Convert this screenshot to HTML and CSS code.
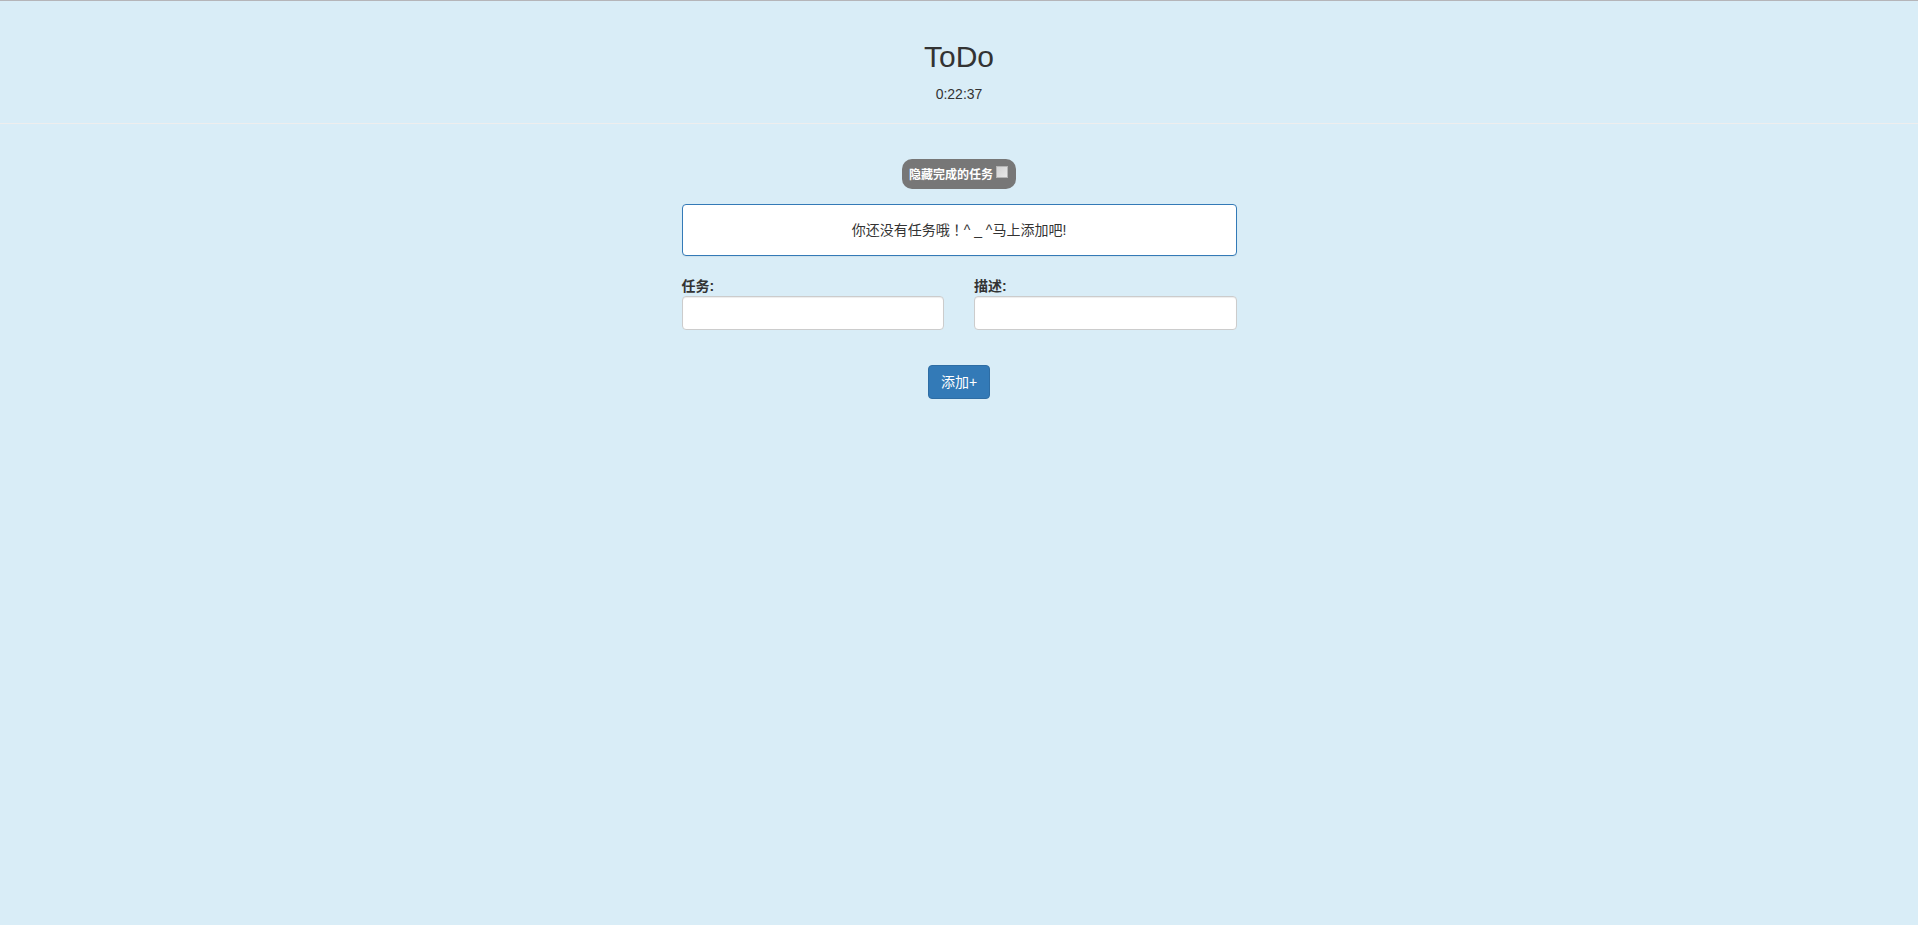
FILE: index.html
```html
<!DOCTYPE html>
<html lang="zh-CN">
<head>
<meta charset="utf-8">
<title>ToDo</title>
<link rel="stylesheet" href="styles.css">
</head>
<body>
<header class="header">
  <h2 class="title">ToDo</h2>
  <p class="clock">0:22:37</p>
</header>
<main class="container">
  <label class="badge" for="hide-done">隐藏完成的任务 <input class="badge-check" type="checkbox" id="hide-done"></label>
  <div class="panel">你还没有任务哦<span class="centered-mark" lang="zh-TW">！</span>^ _ ^马上添加吧!</div>
  <form class="form">
    <div class="fields">
      <div class="field">
        <label class="field-label" for="task">任务:</label>
        <input class="field-input" type="text" id="task">
      </div>
      <div class="field">
        <label class="field-label" for="description">描述:</label>
        <input class="field-input" type="text" id="description">
      </div>
    </div>
    <button class="button" type="button">添加+</button>
  </form>
</main>
</body>
</html>
```

FILE: styles.css
```css
* {
  box-sizing: border-box;
}

body {
  margin: 0;
  min-height: 100vh;
  border-top: 1px solid #b5b5b9;
  background: #d9edf7;
  color: #333;
  font: 14px/20px "Liberation Sans", "Noto Sans CJK SC", sans-serif;
}

.header {
  padding: 39px 0 19px;
  border-bottom: 1px solid #eee;
  text-align: center;
}

.title {
  margin: 0 0 11px;
  font-size: 30px;
  font-weight: 500;
  line-height: 33px;
}

.clock {
  margin: 0;
}

.container {
  display: flex;
  flex-direction: column;
  align-items: center;
  max-width: 555px;
  margin: 35px auto 0;
}

.badge {
  display: flex;
  align-items: center;
  gap: 3px;
  height: 30px;
  padding: 2px 8px 0 7px;
  border-radius: 10px;
  background: #777;
  color: #fff;
  font-size: 12px;
  font-weight: 700;
}

.badge-check {
  appearance: none;
  width: 12px;
  height: 12px;
  margin: 0 0 6px;
  border: 1px solid #b4b4b4;
  background: linear-gradient(135deg, #d2d2d2, #e8e8e8);
}

.badge-check:checked {
  background: #337ab7;
}

.panel {
  width: 100%;
  margin-top: 15px;
  padding: 15px;
  border: 1px solid #337ab7;
  border-radius: 4px;
  background: #fff;
  box-shadow: 0 1px 1px rgba(0, 0, 0, 0.05);
  text-align: center;
}

.centered-mark {
  font-family: "Noto Sans CJK TC", sans-serif;
  line-height: 14px;
}

.form {
  display: flex;
  flex-direction: column;
  align-items: center;
  width: 100%;
  margin-top: 20px;
}

.fields {
  display: grid;
  grid-template-columns: 1fr 1fr;
  gap: 30px;
  width: 100%;
}

.field-label {
  display: block;
  font-weight: 700;
}

.field-input {
  display: block;
  width: 100%;
  height: 34px;
  padding: 6px 12px;
  border: 1px solid #ccc;
  border-radius: 4px;
  background: #fff;
  box-shadow: inset 0 1px 1px rgba(0, 0, 0, 0.075);
  color: #555;
  font: inherit;
}

.button {
  margin-top: 35px;
  padding: 6px 12px;
  border: 1px solid #2e6da4;
  border-radius: 4px;
  background: #337ab7;
  color: #fff;
  font: inherit;
}
```
